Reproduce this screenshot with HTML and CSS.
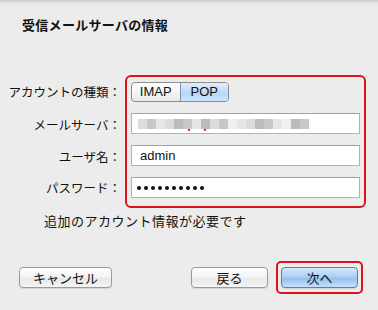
FILE: index.html
```html
<!DOCTYPE html>
<html lang="ja">
<head>
    <meta charset="UTF-8">
    <title>受信メールサーバの情報</title>
    <link rel="stylesheet" href="styles.css">
</head>
<body>
    <div class="sheet">
        <h1>受信メールサーバの情報</h1>

        <div class="account">
            <div class="label row1">アカウントの種類：</div>
            <div class="label row2">メールサーバ：</div>
            <div class="label row3">ユーザ名：</div>
            <div class="label row4">パスワード：</div>

            <div class="highlight">
                <div class="segmented">
                    <span class="seg">IMAP</span>
                    <span class="seg selected">POP</span>
                </div>
                <div class="field blurred">
                    <span class="px g1"></span><span class="px g2"></span><span class="px g3"></span><span class="px g1"></span><span class="px g4"></span><span class="px g2"></span><span class="px g3"></span><span class="px g4"></span><span class="px g1"></span><span class="px g2"></span><span class="px g5"></span><span class="px g3"></span><span class="px g1"></span><span class="px g4"></span><span class="px g2"></span><span class="px g3"></span><span class="px g5"></span><span class="px g4"></span><span class="px g2"></span>
                    <span class="dot d1"></span><span class="dot d2"></span>
                </div>
                <div class="field">admin</div>
                <div class="field password" aria-label="パスワード">
                    <span class="bullet"></span><span class="bullet"></span><span class="bullet"></span><span class="bullet"></span><span class="bullet"></span><span class="bullet"></span><span class="bullet"></span><span class="bullet"></span><span class="bullet"></span><span class="bullet"></span>
                </div>
            </div>
        </div>

        <p class="note">追加のアカウント情報が必要です</p>

        <div class="buttons">
            <button class="btn cancel">キャンセル</button>
            <div class="spacer"></div>
            <button class="btn back">戻る</button>
            <div class="next-wrap">
                <button class="btn primary">次へ</button>
            </div>
        </div>
    </div>
</body>
</html>
```

FILE: styles.css
```css
html, body {
    margin: 0;
    padding: 0;
}

body {
    font-family: "Liberation Sans", "Noto Sans CJK JP", sans-serif;
    font-size: 13px;
    color: #111;
    background: #ececec;
    width: 378px;
    height: 310px;
    overflow: hidden;
}

.sheet {
    height: 310px;
    background: linear-gradient(to bottom, #c9c9c9 0, #dedede 2px, #ececec 5px, #ececec 100%);
}

h1 {
    margin: 0;
    padding: 17px 0 0 22px;
    font-size: 13px;
    font-weight: bold;
    line-height: 18px;
    letter-spacing: 0.3px;
}

.account {
    display: grid;
    grid-template-columns: 125px 241px;
    grid-template-rows: 33px 32px 32px 31px 5px;
    margin-top: 40px;
}

.label {
    grid-column: 1;
    display: flex;
    align-items: center;
    justify-content: flex-end;
    padding-right: 4px;
    white-space: nowrap;
    font-size: 12.5px;
}

.row1 { grid-row: 1; }
.row2 { grid-row: 2; }
.row3 { grid-row: 3; }
.row4 { grid-row: 4; }

.highlight {
    grid-column: 2;
    grid-row: 1 / 6;
    border: 2px solid #d9141b;
    border-radius: 6px;
    padding: 5px 4px 8px 4px;
    display: flex;
    flex-direction: column;
    gap: 11px;
}

.segmented {
    display: flex;
    width: 98px;
    height: 20px;
    box-sizing: border-box;
    border: 1px solid #8c8c8c;
    border-radius: 4px;
    overflow: hidden;
    background: linear-gradient(to bottom, #ffffff, #e9e9e9);
}

.seg {
    flex: 1;
    display: flex;
    align-items: center;
    justify-content: center;
    font-size: 13px;
    line-height: 18px;
}

.seg + .seg {
    border-left: 1px solid #8c8c8c;
}

.seg.selected {
    background: linear-gradient(to bottom, #e1eefc, #b7d6f6 60%, #cfe4fa);
    border-left-color: #7a93b8;
}

.field {
    height: 21px;
    box-sizing: border-box;
    border: 1px solid #b3b3b3;
    border-top-color: #a4a4a4;
    background: #fff;
    padding: 0 8px;
    display: flex;
    align-items: center;
    font-size: 13px;
    position: relative;
}

.password {
    padding-left: 5px;
    gap: 3px;
}

.bullet {
    width: 4px;
    height: 4px;
    border-radius: 50%;
    background: #111;
}

.blurred {
    padding-left: 6px;
}

.px {
    display: inline-block;
    width: 9px;
    height: 10px;
}

.g1 { background: #dcdcdc; }
.g2 { background: #c8c8c8; }
.g3 { background: #e6e6e6; }
.g4 { background: #bcbcbc; }
.g5 { background: #f0f0f0; }

.dot {
    position: absolute;
    width: 2px;
    height: 2px;
    background: #c0392b;
    top: 15px;
}

.d1 { left: 56px; }
.d2 { left: 72px; }

.note {
    margin: 5px 0 0 44px;
    line-height: 18px;
    letter-spacing: 0.5px;
}

.buttons {
    display: flex;
    align-items: center;
    padding: 30px 0 0 19px;
}

.btn {
    font-family: inherit;
    font-size: 13px;
    color: #111;
    height: 21px;
    padding: 0;
    border: 1px solid #9a9a9a;
    border-radius: 4px;
    background: linear-gradient(to bottom, #ffffff, #f1f1f1 50%, #e6e6e6 51%, #f4f4f4);
    box-shadow: 0 1px 1px rgba(0, 0, 0, 0.1);
}

.cancel {
    width: 93px;
}

.spacer {
    flex: 0 0 79px;
}

.back {
    width: 77px;
}

.next-wrap {
    margin-left: 8px;
    border: 2px solid #d9141b;
    border-radius: 5px;
    padding: 4px 3px;
}

.primary {
    width: 77px;
    border-color: #5a7fb5;
    background: linear-gradient(to bottom, #d6e8fb, #a8cdf3 50%, #8fbdee 51%, #c4e0fb);
}
```
